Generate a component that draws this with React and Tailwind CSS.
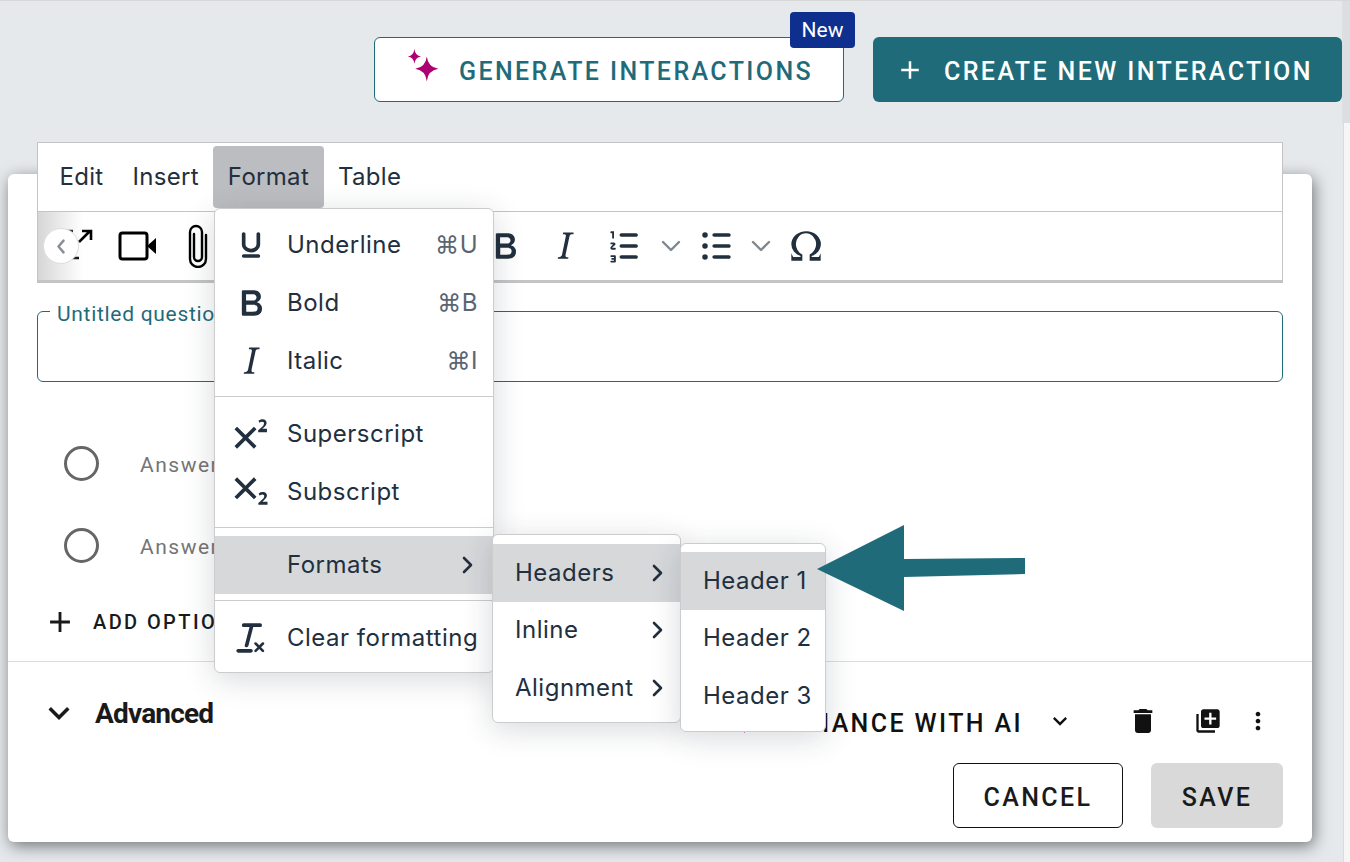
const Tiny = ({ d, className = "w-11 h-11" }) => (
  <svg viewBox="0 0 24 24" className={className} fill="currentColor">
    <path d={d} />
  </svg>
);

const Mui = Tiny;

const icons = {
  underline: "M16 5c.6 0 1 .4 1 1v5.5a4 4 0 0 1-.4 1.8l-1 1.4a5.3 5.3 0 0 1-5.5 1 5 5 0 0 1-1.6-1c-.5-.4-.8-.9-1.1-1.4a4 4 0 0 1-.4-1.8V6c0-.6.4-1 1-1s1 .4 1 1v5.5c0 .3 0 .6.2 1l.6.7a3.3 3.3 0 0 0 2.2.8 3.4 3.4 0 0 0 2.2-.8c.3-.2.4-.5.6-.8l.2-.9V6c0-.6.4-1 1-1zM8 17h8c.6 0 1 .4 1 1s-.4 1-1 1H8a1 1 0 0 1 0-2z",
  bold: "M7.8 19c-.3 0-.5 0-.6-.2l-.2-.5V5.7c0-.2 0-.4.2-.5l.6-.2h5c1.5 0 2.7.3 3.5 1 .7.6 1.1 1.4 1.1 2.5a3 3 0 0 1-.6 1.9c-.4.6-1 1-1.6 1.2.4.1.9.3 1.3.6s.8.7 1 1.2c.4.4.5 1 .5 1.6 0 1.3-.4 2.3-1.3 3-.8.7-2.1 1-3.8 1H7.8zm5-8.3c.6 0 1.2-.1 1.6-.5.4-.3.6-.7.6-1.3 0-1.1-.8-1.7-2.3-1.7H9.3v3.5h3.4zm.5 6c.7 0 1.3-.1 1.7-.4.4-.4.6-.9.6-1.5s-.2-1-.7-1.4c-.4-.3-1-.4-2-.4H9.4v3.8h4z",
  italic: "M16.7 4.7l-.1.9h-.3c-.6 0-1 0-1.4.3-.3.3-.4.6-.5 1.1l-2.1 9.8v.6c0 .5.4.8 1.4.8h.2l-.2.8H8l.2-.8h.2c1.1 0 1.8-.5 2-1.5l2-9.8.1-.5c0-.6-.4-.8-1.4-.8h-.3l.2-.9h5.8z",
  sup: "M15 9.4L10.4 14l4.6 4.6-1.4 1.4L9 15.4 4.4 20 3 18.6 7.6 14 3 9.4 4.4 8 9 12.6 13.6 8 15 9.4zm5.9 1.6h-5v-1l1-.8 1.7-1.6c.3-.5.5-.9.5-1.3 0-.3 0-.5-.2-.7-.2-.2-.5-.3-.9-.3l-.8.2-.7.4-.4-1.2c.2-.2.5-.4 1-.5.3-.2.8-.2 1.2-.2.7 0 1.2.2 1.6.5.4.4.6.9.6 1.4s-.1.9-.4 1.3a9 9 0 0 1-1.4 1.5l-.6.5h2.6V11z",
  sub: "M10.4 10l4.6 4.6-1.4 1.4L9 11.4 4.4 16 3 14.6 7.6 10 3 5.4 4.4 4 9 8.6 13.6 4 15 5.4 10.4 10zM21 19h-5v-1l1-.8 1.7-1.6c.3-.4.5-.8.5-1.2 0-.3 0-.6-.2-.7-.2-.2-.5-.3-.9-.3a2 2 0 0 0-.8.2l-.7.3-.4-1.1 1-.6 1.2-.2c.8 0 1.3.2 1.7.5.4.4.6.9.6 1.4 0 .5-.2 1-.5 1.4l-1.4 1.5-.6.5H21V19z",
  clear: "M13.2 6a1 1 0 0 1 0 .2l-2.6 10a1 1 0 0 1-1 .8h-.2a.8.8 0 0 1-.8-1l2.6-10H8a1 1 0 1 1 0-2h9a1 1 0 0 1 0 2h-3.8zM5 18h7a1 1 0 0 1 0 2H5a1 1 0 0 1 0-2zm13 1.5L16.5 18 15 19.5a.7.7 0 0 1-1-1l1.5-1.5-1.5-1.5a.7.7 0 0 1 1-1l1.5 1.5 1.5-1.5a.7.7 0 0 1 1 1L17.5 17l1.5 1.5a.7.7 0 0 1-1 1z",
  omega: "M15 18h4l1-2v4h-6v-3.3l1.4-1a6 6 0 0 0 1.8-2.9 6.3 6.3 0 0 0-.1-4.1 5.8 5.8 0 0 0-3-3.2c-.6-.3-1.3-.5-2.1-.5a5.1 5.1 0 0 0-3.9 1.8 6.3 6.3 0 0 0-1.3 6 6.2 6.2 0 0 0 1.8 3l1.4.9V20H4v-4l1 2h4v-.5l-2-1L5.4 15A6.5 6.5 0 0 1 4 11c0-1 .2-1.9.6-2.7A7 7 0 0 1 6.3 6C7.1 5.4 8 5 9 4.5c1-.3 2-.5 3.1-.5a8.8 8.8 0 0 1 5.7 2 7 7 0 0 1 1.7 2.3 6 6 0 0 1 .2 4.8c-.2.7-.6 1.3-1 1.9a7.6 7.6 0 0 1-3.6 2.5v.5z",
  numlist: "M10 17h8c.6 0 1 .4 1 1s-.4 1-1 1h-8a1 1 0 0 1 0-2zm0-6h8c.6 0 1 .4 1 1s-.4 1-1 1h-8a1 1 0 0 1 0-2zm0-6h8c.6 0 1 .4 1 1s-.4 1-1 1h-8a1 1 0 1 1 0-2zM6 4v3.5c0 .3-.2.5-.5.5a.5.5 0 0 1-.5-.5V5h-.5a.5.5 0 0 1 0-1H6zm-1 8.8l.2.2h1.3c.3 0 .5.2.5.5s-.2.5-.5.5H4.9a.9.9 0 0 1-.9-.9c0-.2 0-.4.2-.5l1.3-1.5h-1a.5.5 0 0 1 0-1h1.4c.5 0 .9.4.9.9 0 .2 0 .4-.2.5L5 12.8zm1.5 5.2H4.5a.5.5 0 0 1 0-1h2c.3 0 .5.2.5.5v3c0 .3-.2.5-.5.5h-2a.5.5 0 0 1 0-1h1.5v-.5H5a.5.5 0 0 1 0-1h1V18z",
  bullist: "M11 5h8c.6 0 1 .4 1 1s-.4 1-1 1h-8a1 1 0 0 1 0-2zm0 6h8c.6 0 1 .4 1 1s-.4 1-1 1h-8a1 1 0 0 1 0-2zm0 6h8c.6 0 1 .4 1 1s-.4 1-1 1h-8a1 1 0 0 1 0-2zM4.5 6a1.5 1.5 0 1 1 3 0 1.5 1.5 0 0 1-3 0zm0 6a1.5 1.5 0 1 1 3 0 1.5 1.5 0 0 1-3 0zm0 6a1.5 1.5 0 1 1 3 0 1.5 1.5 0 0 1-3 0z",
  trash: "M6 19c0 1.1.9 2 2 2h8c1.1 0 2-.9 2-2V7H6v12zM19 4h-3.5l-1-1h-5l-1 1H5v2h14V4z",
  libraryAdd: "M4 6H2v14c0 1.1.9 2 2 2h14v-2H4V6zm16-4H8c-1.1 0-2 .9-2 2v12c0 1.1.9 2 2 2h12c1.1 0 2-.9 2-2V4c0-1.1-.9-2-2-2zm-1 9h-4v4h-2v-4H9V9h4V5h2v4h4v2z",
  moreVert: "M12 8c1.1 0 2-.9 2-2s-.9-2-2-2-2 .9-2 2 .9 2 2 2zm0 2c-1.1 0-2 .9-2 2s.9 2 2 2 2-.9 2-2-.9-2-2-2zm0 6c-1.1 0-2 .9-2 2s.9 2 2 2 2-.9 2-2-.9-2-2-2z",
  expand: "M16.59 8.59 12 13.17 7.41 8.59 6 10l6 6 6-6z",
  plus: "M19 13h-6v6h-2v-6H5v-2h6V5h2v6h6v2z",
};

const Sparkle = ({ className = "" }) => (
  <svg viewBox="0 0 40 40" className={className} fill="#ad0072">
    <path d="M24 9 Q25.5 22 38 24 Q25.5 26 24 39 Q22.5 26 10 24 Q22.5 22 24 9Z" />
    <path d="M9 0 Q9.8 8 17 9 Q9.8 10 9 18 Q8.2 10 1 9 Q8.2 8 9 0Z" />
  </svg>
);

const Chevron = () => (
  <svg viewBox="0 0 12 20" className="w-3 h-5" fill="none" stroke="#222f3e" strokeWidth="2.6" strokeLinecap="round" strokeLinejoin="round">
    <path d="M2 3l7 7-7 7" />
  </svg>
);

const SmallDown = () => (
  <svg viewBox="0 0 20 12" className="w-5 h-3" fill="none" stroke="#7f8790" strokeWidth="2.4" strokeLinecap="round" strokeLinejoin="round">
    <path d="M2 2l8 8 8-8" />
  </svg>
);

const MenuRow = ({ icon, label, shortcut, arrow, active }) => (
  <div className={`flex h-[58px] items-center pl-[14px] pr-[15px] ${active ? "bg-[#d6d8da]" : ""}`}>
    <span className="flex w-[58px] shrink-0 items-center">
      {icon && <Tiny d={icon} />}
    </span>
    <span className="flex-1 whitespace-nowrap">{label}</span>
    {shortcut && <span className="text-[#5b6572]">{shortcut}</span>}
    {arrow && <span className="mr-[4px]"><Chevron /></span>}
  </div>
);

const SubRow = ({ label, arrow, active }) => (
  <div className={`flex h-[57.5px] items-center justify-between pl-[22px] pr-[16px] whitespace-nowrap ${active ? "bg-[#d6d8da]" : ""}`}>
    <span>{label}</span>
    {arrow && <Chevron />}
  </div>
);

const Sep = () => <div className="mb-[8px] mt-[6px] h-px bg-[#cccccc]" />;

const FormatMenu = () => (
  <div className="absolute left-[214px] top-[207px] w-[280px] rounded-md border border-[#cccccc] bg-white pb-[5px] pt-[7px] text-[#222f3e] shadow-[0_6px_30px_rgba(34,47,62,0.18)]">
    <MenuRow icon={icons.underline} label="Underline" shortcut="⌘U" />
    <MenuRow icon={icons.bold} label="Bold" shortcut="⌘B" />
    <MenuRow icon={icons.italic} label="Italic" shortcut="⌘I" />
    <Sep />
    <MenuRow icon={icons.sup} label="Superscript" />
    <MenuRow icon={icons.sub} label="Subscript" />
    <Sep />
    <MenuRow label="Formats" arrow active />
    <Sep />
    <MenuRow icon={icons.clear} label="Clear formatting" />
  </div>
);

const FormatsMenu = () => (
  <div className="absolute left-[492px] top-[533px] w-[189px] rounded-md border border-[#cccccc] bg-white pb-[5px] pt-[9px] text-[#222f3e] shadow-[0_6px_30px_rgba(34,47,62,0.18)]">
    <SubRow label="Headers" arrow active />
    <SubRow label="Inline" arrow />
    <SubRow label="Alignment" arrow />
  </div>
);

const HeadersMenu = () => (
  <div className="absolute left-[680px] top-[542px] w-[146px] rounded-md border border-[#cccccc] bg-white pb-[6px] pt-[8px] text-[#222f3e] shadow-[0_6px_30px_rgba(34,47,62,0.18)]">
    <SubRow label="Header 1" active />
    <SubRow label="Header 2" />
    <SubRow label="Header 3" />
  </div>
);

const Toolbar = () => (
  <div className="relative flex h-[68px] items-center pl-[9px] text-[#222f3e]">
    <span className="flex w-[60px] justify-center">
      <svg viewBox="0 0 36 36" className="h-9 w-9" fill="none" stroke="#000" strokeWidth="2.6">
        <path d="M4 3h10M4 30h16" />
        <path d="M20 14L31 3M23 3h9v9" />
      </svg>
    </span>
    <span className="flex w-[61px] justify-center">
      <svg viewBox="0 0 40 30" className="h-[30px] w-10">
        <rect x="2" y="2" width="27" height="26" rx="2.5" fill="none" stroke="#000" strokeWidth="3" />
        <path d="M29 15l9-8v16z" fill="#000" />
      </svg>
    </span>
    <span className="flex w-[60px] justify-center">
      <svg viewBox="0 0 24 44" className="h-11 w-6" fill="none" stroke="#000" strokeWidth="2.4" strokeLinecap="round">
        <path d="M8 10v23a4 4 0 0 0 8 0V8a6 6 0 0 0-12 0v27a8 8 0 0 0 16 0V11" />
      </svg>
    </span>
    <span className="w-[247px]" />
    <span className="flex w-[60px] justify-center"><Tiny d={icons.bold} /></span>
    <span className="flex w-[60px] justify-center"><Tiny d={icons.italic} /></span>
    <span className="flex w-[60px] justify-center"><Tiny d={icons.numlist} /></span>
    <span className="flex w-[32px] justify-center"><SmallDown /></span>
    <span className="flex w-[58px] justify-center"><Tiny d={icons.bullist} /></span>
    <span className="flex w-[32px] justify-center"><SmallDown /></span>
    <span className="flex w-[58px] justify-center"><Tiny d={icons.omega} /></span>

    {/* scroll shade + back button */}
    <div className="absolute inset-y-0 left-0 w-[45px] bg-gradient-to-r from-[#d6d6d6] to-transparent" />
    <div className="absolute left-[5px] top-[16px] flex h-[36px] w-[36px] items-center justify-center rounded-full border border-[#dddddd] bg-white">
      <svg viewBox="0 0 12 18" className="h-[15px] w-[10px]" fill="none" stroke="#8b8f94" strokeWidth="3" strokeLinecap="round" strokeLinejoin="round">
        <path d="M9 2L3 9l6 7" />
      </svg>
    </div>
  </div>
);

const Editor = () => (
  <div className="-mt-8 mx-[29px] border border-b-[3px] border-[#c4c4c4] bg-white font-['Inter',sans-serif] text-[24px]">
    <div className="flex h-[69px] items-center border-b border-[#c4c4c4] pl-[7px] tracking-[0.3px] text-[#222f3e]">
      <span className="px-[14.5px]">Edit</span>
      <span className="px-[14.5px]">Insert</span>
      <span className="flex h-[62px] items-center rounded bg-[#bbbdc1] px-[14.5px]">Format</span>
      <span className="px-[14.5px]">Table</span>
    </div>
    <Toolbar />
  </div>
);

const AnswerRow = ({ label, className }) => (
  <div className={`flex h-[34px] items-center pl-[56px] ${className}`}>
    <span className="h-[35px] w-[35px] rounded-full border-[3px] border-[#666666]" />
    <span className="ml-[41px] pt-[6px] text-[21px] tracking-[1.5px] text-[#757575]">{label}</span>
  </div>
);

export default function App() {
  return (
    <div className="relative h-[862px] w-[1350px] overflow-hidden border-t border-[#d8d8d8] bg-[#e5e9ec] font-['Roboto',sans-serif]">
      {/* scrollbar strip */}
      <div className="absolute right-0 top-0 h-[122px] w-[8px] bg-[#dcdfe2]" />
      <div className="absolute right-0 top-[122px] bottom-0 w-[7px] border-l border-[#d9dcdf] bg-[#f6f6f6]" />

      {/* header buttons */}
      <div className="flex justify-end gap-[29px] pr-[8px] pt-[36px]">
        <div className="relative flex h-[65px] w-[470px] items-center rounded-md border border-[#1f6b7a] bg-white pl-[32px] text-[25px] font-medium tracking-[2.4px] text-[#1f6b7a]">
          <Sparkle className="-mt-[8px] mr-[19px] h-[33px] w-[33px] shrink-0" />
          <span className="pt-[5px]">GENERATE INTERACTIONS</span>
          <span className="absolute -right-[12px] -top-[26px] flex h-[36px] w-[65px] items-center justify-center rounded bg-[#0f2f8f] pt-[2px] text-[21px] font-normal tracking-normal text-white">New</span>
        </div>
        <div className="flex h-[65px] w-[469px] items-center rounded-md bg-[#1f6b7a] pl-[22px] text-[25px] font-medium tracking-[2.4px] text-white">
          <Mui d={icons.plus} className="mr-[19px] h-[30px] w-[30px]" />
          <span className="pt-[5px]">CREATE NEW INTERACTION</span>
        </div>
      </div>

      {/* card */}
      <div className="ml-[8px] mt-[72px] flex h-[668px] w-[1304px] flex-col rounded-md bg-white shadow-[2px_4px_16px_rgba(0,0,0,0.5)]">
        <Editor />

        <div className="relative mx-[29px] mt-[28px] h-[71px] rounded-md border border-[#1f6b7a]">
          <span className="absolute -top-[10px] left-[12px] bg-white px-[7px] text-[21px] leading-[24px] tracking-[0.7px] text-[#1f6b7a]">Untitled question</span>
        </div>

        <AnswerRow label="Answer 1" className="mt-[64px]" />
        <AnswerRow label="Answer 2" className="mt-[48px]" />

        <div className="mt-[48px] flex h-[24px] items-center pl-[35px] text-[20px] font-medium tracking-[2.4px] text-[#1a1a1a]">
          <Mui d={icons.plus} className="h-[34px] w-[34px]" />
          <span className="ml-[16px]">ADD OPTION</span>
        </div>

        <div className="mt-[27px] h-px shrink-0 bg-[#dddddd]" />

        <div className="flex justify-between pl-[30px] pr-[40px] pt-[34px]">
          <div className="flex h-[34px] items-center text-[28px] font-bold tracking-[-0.8px] text-[#1a1a1a]">
            <Mui d={icons.expand} className="h-[42px] w-[42px]" />
            <span className="ml-[15px] pt-[2px]">Advanced</span>
          </div>
          <div className="flex h-[50px] items-center text-[#111111]">
            <Sparkle className="mr-[20px] h-[26px] w-[26px]" />
            <span className="pt-[6px] text-[25px] font-medium tracking-[2.4px]">ENHANCE WITH AI</span>
            <Mui d={icons.expand} className="ml-[23px] h-[28px] w-[28px]" />
            <Mui d={icons.trash} className="ml-[53px] h-[32px] w-[32px]" />
            <Mui d={icons.libraryAdd} className="ml-[35px] h-[28px] w-[28px]" />
            <Mui d={icons.moreVert} className="ml-[22px] h-[28px] w-[28px]" />
          </div>
        </div>

        <div className="mt-[17px] flex justify-end gap-[28px] pr-[29px] text-[25px] font-medium tracking-[2.4px] text-[#1a1a1a]">
          <div className="flex h-[65px] w-[170px] items-center justify-center rounded-md border border-[#111111] pt-[4px]">CANCEL</div>
          <div className="flex h-[65px] w-[132px] items-center justify-center rounded-md bg-[#d9d9d9] pt-[4px]">SAVE</div>
        </div>
      </div>

      {/* open menus */}
      <div className="font-['Inter',sans-serif] text-[24px] tracking-[0.5px]">
        <FormatMenu />
        <FormatsMenu />
        <HeadersMenu />
      </div>

      {/* callout arrow */}
      <svg className="absolute left-[815px] top-[523px]" width="212" height="90" viewBox="0 0 212 90" fill="#1f6b7a">
        <path d="M2 45L89 1v34l121-1v16l-121 3v34z" />
      </svg>
    </div>
  );
}
